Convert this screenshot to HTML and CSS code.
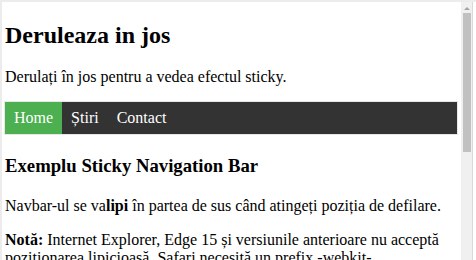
FILE: index.html
```html
<!DOCTYPE html>
<html lang="ro">
<head>
  <meta charset="UTF-8" />
  <title>Sticky Navigation Bar</title>
  <link rel="stylesheet" href="styles.css">
</head>
<body>
  <div class="frame">
    <div class="page">
      <h2>Deruleaza in jos</h2>
      <p class="intro">Derulați în jos pentru a vedea efectul sticky.</p>

      <ul class="navbar">
        <li><a class="active" href="#home">Home</a></li>
        <li><a href="#news">Știri</a></li>
        <li><a href="#contact">Contact</a></li>
      </ul>

      <h3>Exemplu Sticky Navigation Bar</h3>
      <p>Navbar-ul se va<b>lipi</b> în partea de sus când atingeți poziția de defilare.</p>
      <p class="note"><b>Notă:</b> Internet Explorer, Edge 15 și versiunile anterioare nu acceptă poziționarea lipicioasă. Safari necesită un prefix -webkit-.</p>
    </div>

    <div class="scrollbar">
      <div class="scroll-track">
        <div class="scroll-arrow"></div>
        <div class="scroll-thumb"></div>
      </div>
      <div class="scroll-edge"></div>
    </div>
  </div>
</body>
</html>
```

FILE: styles.css
```css
html, body { margin: 0; padding: 0; background: #fff; }
body { font-family: "Liberation Serif", "Times New Roman", serif; font-size: 16px; color: #000; }

.frame { display: flex; height: 258px; overflow: hidden; border-top: 2px solid #ececec; border-left: 2px solid #ececec; }
.page { flex: 1; min-width: 0; padding: 0 3px 0 2px; overflow: hidden; }

h2 { font-size: 24px; margin: 19.5px 0; padding-left: 1px; }
h3 { font-size: 18.72px; margin: 20.5px 0 20px; padding-left: 1px; }
p { margin: 16px 0; padding-left: 1px; }
.intro { margin-bottom: 14.5px; }
.note { margin-top: 15px; }

.navbar { list-style: none; margin: 0; padding: 0; display: flex; background: #333; border: 1px solid #e7e7e7; position: sticky; top: 0; }
.navbar a { display: block; padding: 7px 9px; color: #fff; text-decoration: none; }
.navbar a.active { background: #4CAF50; }

.scrollbar { width: 15px; display: flex; flex-shrink: 0; }
.scroll-track { width: 11px; background: #f0f0f0; display: flex; flex-direction: column; align-items: center; }
.scroll-arrow { width: 0; height: 0; margin-top: 5px; border-left: 3px solid transparent; border-right: 3px solid transparent; border-bottom: 3px solid #a3a3a3; }
.scroll-thumb { width: 8px; height: 139px; margin-top: 3px; background: #c1c1c1; }
.scroll-edge { width: 1px; background: #d9d9d9; }
```
